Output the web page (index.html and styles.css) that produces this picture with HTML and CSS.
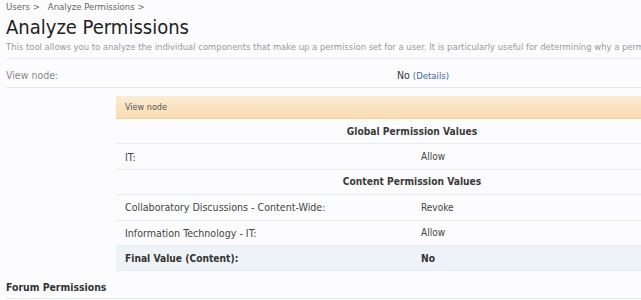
FILE: index.html
```html
<!DOCTYPE html>
<html>
<head>
<meta charset="utf-8">
<link rel="stylesheet" href="styles.css">
</head>
<body>
<div class="page">
  <nav class="crumbs"><span class="crumb">Users &gt;</span><span class="crumb">Analyze Permissions &gt;</span></nav>
  <h1 class="title">Analyze Permissions</h1>
  <p class="desc">This tool allows you to analyze the individual components that make up a permission set for a user. It is particularly useful for determining why a permission has a particular value.</p>
  <div class="ctrl">
    <div class="ctrl-label">View node:</div>
    <div class="ctrl-value"><span class="strong">No</span> <a class="link">(Details)</a></div>
  </div>
  <div class="details">
    <div class="details-head">View node</div>
    <div class="row sub"><div class="cell full">Global Permission Values</div></div>
    <div class="row"><div class="cell name">IT:</div><div class="cell val center">Allow</div></div>
    <div class="row sub"><div class="cell full">Content Permission Values</div></div>
    <div class="row"><div class="cell name">Collaboratory Discussions - Content-Wide:</div><div class="cell val">Revoke</div></div>
    <div class="row"><div class="cell name">Information Technology - IT:</div><div class="cell val">Allow</div></div>
    <div class="row final"><div class="cell name">Final Value (Content):</div><div class="cell val">No</div></div>
  </div>
  <h2 class="section">Forum Permissions</h2>
</div>
</body>
</html>
```
FILE: styles.css
```css
html, body {
  margin: 0;
  padding: 0;
  background: #fcfcfe;
  overflow: hidden;
}
.page {
  width: 702px;
  padding: 0 0 0 6px;
  font-family: "DejaVu Sans Condensed", "DejaVu Sans", sans-serif;
  font-stretch: condensed;
  color: #333;
}
.crumbs {
  display: flex;
  gap: 8px;
  height: 13px;
  font-size: 9.5px;
  line-height: 13px;
  color: #666;
}
.title {
  margin: 0;
  padding-top: 1px;
  font-size: 20px;
  font-weight: normal;
  line-height: 26px;
  color: #222;
}
.desc {
  margin: 0;
  font-size: 9.4px;
  line-height: 14px;
  color: #999;
  white-space: nowrap;
  overflow: hidden;
  padding-bottom: 4px;
  border-bottom: 1px solid #e8ecf0;
}
.ctrl {
  display: flex;
  height: 24px;
  align-items: center;
  padding-top: 4px;
  border-bottom: 1px solid #dde9ee;
  font-size: 10.5px;
}
.ctrl-label {
  width: 391px;
  color: #888;
}
.ctrl-value {
  color: #333;
}
.link {
  color: #3b6a98;
  font-size: 9.5px;
}
.details {
  margin: 8px 0 0 110px;
  width: 592px;
  font-size: 10.6px;
}
.details-head {
  height: 22px;
  line-height: 22px;
  padding-left: 9px;
  font-size: 9px;
  color: #555;
  background: linear-gradient(#fcebd3, #f8dcb2);
  border-bottom: 1px solid #f3cf9c;
}
.row {
  display: flex;
  height: 24.4px;
  align-items: center;
  border-bottom: 1px solid #e6edf1;
}
.cell {
  padding: 0 9px;
}
.cell.full {
  flex: 1;
  text-align: center;
  font-size: 10.2px;
  font-weight: bold;
  color: #3a3a3a;
}
.cell.name {
  width: 278px;
  color: #444;
}
.cell.val {
  color: #444;
  font-size: 10px;
}
.final {
  background: #eef3f8;
}
.final .cell {
  font-weight: bold;
  font-size: 10.2px;
  color: #333;
}
.section {
  margin: 0;
  height: 27px;
  line-height: 33px;
  font-size: 10.4px;
  font-weight: bold;
  color: #333;
  border-bottom: 1px solid #e6edf1;
}
```
